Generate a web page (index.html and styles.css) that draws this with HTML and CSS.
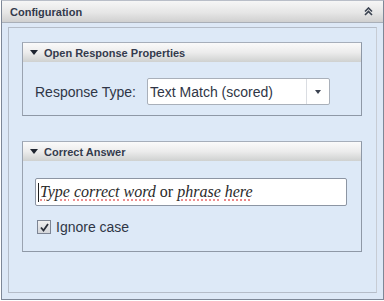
FILE: index.html
```html
<!DOCTYPE html>
<html>
<head>
<meta charset="utf-8">
<link rel="stylesheet" href="styles.css">
</head>
<body>
<div class="frame">
  <div class="frame-head">
    <span class="frame-title">Configuration</span>
    <svg class="collapse" width="9" height="9" viewBox="0 0 9 9"><path d="M1 4.5 L4.5 1 L8 4.5 M1 8 L4.5 4.5 L8 8" fill="none" stroke="#3a4250" stroke-width="1.6"/></svg>
  </div>
  <div class="panel">
    <div class="section">
      <div class="sec-head"><span class="tri"></span>Open Response Properties</div>
      <div class="sec-body row">
        <span class="label">Response Type:</span>
        <div class="select">
          <span class="select-text">Text Match (scored)</span>
          <span class="select-btn"><span class="tri-small"></span></span>
        </div>
      </div>
    </div>
    <div class="section">
      <div class="sec-head"><span class="tri"></span>Correct Answer</div>
      <div class="sec-body col">
        <div class="input"><span class="caret"></span><span class="ph"><i class="sp">Type</i> <i class="sp">correct</i> <i class="sp">word</i> or <i class="sp">phrase</i> <i class="sp">here</i></span></div>
        <label class="check"><span class="box"><svg width="11" height="11" viewBox="0 0 11 11"><path d="M2 5.5 L4.5 8.5 L9 2" fill="none" stroke="#2a2f3a" stroke-width="1.8"/></svg></span>Ignore case</label>
      </div>
    </div>
  </div>
</div>
</body>
</html>
```

FILE: styles.css
```css
html, body {
  margin: 0;
  padding: 0;
  background: #ffffff;
}
body {
  width: 384px;
  height: 301px;
  overflow: hidden;
  font-family: "Liberation Sans", Arial, sans-serif;
}
.frame {
  margin: 0 0 0 1px;
  width: 381px;
  height: 298px;
  border: 1px solid #7d8797;
  border-top-color: #b9bec8;
  background: #dde8f6;
  display: flex;
  flex-direction: column;
}
.frame-head {
  height: 21px;
  flex: none;
  display: flex;
  align-items: center;
  justify-content: space-between;
  padding: 0 8px 0 8px;
  background: linear-gradient(#f6f6f6, #e6e6e6 55%, #d0d0d0);
  border-bottom: 1px solid #a9afb8;
}
.frame-title {
  font-size: 11px;
  font-weight: bold;
  color: #333a4c;
}
.collapse {
  margin-right: 2px;
}
.panel {
  margin: 4px 6px 6px 6px;
  flex: 1;
  border: 1px solid #b4bcc8;
  border-right-color: #c7ccd4;
  background: #dde9f7;
  padding: 14px 14px 0 13px;
  display: flex;
  flex-direction: column;
  gap: 25px;
}
.section {
  border: 1px solid #8e98a6;
  border-left-color: #9aa3b0;
  border-top-color: #a6aeba;
  background: #dde9f7;
}
.sec-head {
  height: 19px;
  display: flex;
  align-items: center;
  padding-left: 7px;
  font-size: 11px;
  font-weight: bold;
  color: #343b4d;
  background: linear-gradient(#fafafa, #ececec 50%, #cfd1d0);
}
.tri {
  width: 0;
  height: 0;
  border-left: 4px solid transparent;
  border-right: 4px solid transparent;
  border-top: 5px solid #1f2530;
  margin-right: 6px;
}
.sec-body.row {
  display: flex;
  align-items: center;
  padding: 16px 0 10px 12px;
}
.label {
  font-size: 14px;
  color: #2f3646;
  width: 112px;
}
.select {
  width: 181px;
  height: 25px;
  border: 1px solid #a9b0ba;
  border-radius: 2px;
  background: #ffffff;
  display: flex;
  align-items: center;
}
.select-text {
  flex: 1;
  font-size: 14px;
  color: #2f3646;
  padding-left: 2px;
}
.select-btn {
  width: 22px;
  height: 25px;
  border-left: 1px solid #dadde2;
  display: flex;
  align-items: center;
  justify-content: center;
}
.tri-small {
  width: 0;
  height: 0;
  border-left: 3px solid transparent;
  border-right: 3px solid transparent;
  border-top: 4px solid #3b4250;
}
.sec-body.col {
  display: flex;
  flex-direction: column;
  padding: 17px 0 16px 12px;
  gap: 13px;
}
.input {
  width: 308px;
  height: 26px;
  border: 1px solid #8c95a3;
  border-radius: 2px;
  background: #ffffff;
  display: flex;
  align-items: center;
  padding-left: 2px;
}
.caret {
  width: 1px;
  height: 19px;
  background: #222;
  margin-right: 1px;
}
.ph {
  font-family: "Liberation Serif", "Times New Roman", serif;
  font-size: 16px;
  color: #2a2a2a;
  white-space: nowrap;
}
.sp {
  text-decoration: underline dotted #e86a6a;
  text-underline-offset: 3px;
}
.check {
  display: flex;
  align-items: center;
  font-size: 14px;
  color: #2f3646;
  padding-left: 2px;
}
.box {
  width: 12px;
  height: 12px;
  border: 1px solid #7d8594;
  background: linear-gradient(#f0f0f0, #d4d6da);
  display: flex;
  align-items: center;
  justify-content: center;
  margin-right: 5px;
}
```
